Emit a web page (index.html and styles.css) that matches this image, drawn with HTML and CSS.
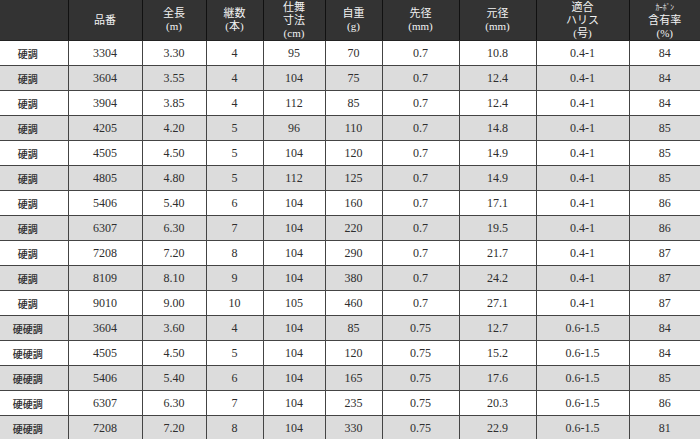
FILE: index.html
```html
<!DOCTYPE html>
<html lang="ja">
<head>
<meta charset="utf-8">
<link rel="stylesheet" href="styles.css">
</head>
<body>
<table class="spec">
  <colgroup>
    <col class="c1"><col class="c2"><col class="c3"><col class="c4"><col class="c5">
    <col class="c6"><col class="c7"><col class="c8"><col class="c9"><col class="c10">
  </colgroup>
  <thead>
    <tr>
      <th></th>
      <th>品番</th>
      <th>全長<br>(m)</th>
      <th>継数<br>(本)</th>
      <th>仕舞<br>寸法<br>(cm)</th>
      <th>自重<br>(g)</th>
      <th>先径<br>(mm)</th>
      <th>元径<br>(mm)</th>
      <th>適合<br>ハリス<br>(号)</th>
      <th><span class="small">ｶｰﾎﾞﾝ</span><br>含有率<br>(%)</th>
    </tr>
  </thead>
  <tbody>
    <tr><td class="type">硬調</td><td>3304</td><td>3.30</td><td>4</td><td>95</td><td>70</td><td>0.7</td><td>10.8</td><td>0.4-1</td><td>84</td></tr>
    <tr><td class="type">硬調</td><td>3604</td><td>3.55</td><td>4</td><td>104</td><td>75</td><td>0.7</td><td>12.4</td><td>0.4-1</td><td>84</td></tr>
    <tr><td class="type">硬調</td><td>3904</td><td>3.85</td><td>4</td><td>112</td><td>85</td><td>0.7</td><td>12.4</td><td>0.4-1</td><td>84</td></tr>
    <tr><td class="type">硬調</td><td>4205</td><td>4.20</td><td>5</td><td>96</td><td>110</td><td>0.7</td><td>14.8</td><td>0.4-1</td><td>85</td></tr>
    <tr><td class="type">硬調</td><td>4505</td><td>4.50</td><td>5</td><td>104</td><td>120</td><td>0.7</td><td>14.9</td><td>0.4-1</td><td>85</td></tr>
    <tr><td class="type">硬調</td><td>4805</td><td>4.80</td><td>5</td><td>112</td><td>125</td><td>0.7</td><td>14.9</td><td>0.4-1</td><td>85</td></tr>
    <tr><td class="type">硬調</td><td>5406</td><td>5.40</td><td>6</td><td>104</td><td>160</td><td>0.7</td><td>17.1</td><td>0.4-1</td><td>86</td></tr>
    <tr><td class="type">硬調</td><td>6307</td><td>6.30</td><td>7</td><td>104</td><td>220</td><td>0.7</td><td>19.5</td><td>0.4-1</td><td>86</td></tr>
    <tr><td class="type">硬調</td><td>7208</td><td>7.20</td><td>8</td><td>104</td><td>290</td><td>0.7</td><td>21.7</td><td>0.4-1</td><td>87</td></tr>
    <tr><td class="type">硬調</td><td>8109</td><td>8.10</td><td>9</td><td>104</td><td>380</td><td>0.7</td><td>24.2</td><td>0.4-1</td><td>87</td></tr>
    <tr><td class="type">硬調</td><td>9010</td><td>9.00</td><td>10</td><td>105</td><td>460</td><td>0.7</td><td>27.1</td><td>0.4-1</td><td>87</td></tr>
    <tr><td class="type">硬硬調</td><td>3604</td><td>3.60</td><td>4</td><td>104</td><td>85</td><td>0.75</td><td>12.7</td><td>0.6-1.5</td><td>84</td></tr>
    <tr><td class="type">硬硬調</td><td>4505</td><td>4.50</td><td>5</td><td>104</td><td>120</td><td>0.75</td><td>15.2</td><td>0.6-1.5</td><td>84</td></tr>
    <tr><td class="type">硬硬調</td><td>5406</td><td>5.40</td><td>6</td><td>104</td><td>165</td><td>0.75</td><td>17.6</td><td>0.6-1.5</td><td>85</td></tr>
    <tr><td class="type">硬硬調</td><td>6307</td><td>6.30</td><td>7</td><td>104</td><td>235</td><td>0.75</td><td>20.3</td><td>0.6-1.5</td><td>86</td></tr>
    <tr><td class="type">硬硬調</td><td>7208</td><td>7.20</td><td>8</td><td>104</td><td>330</td><td>0.75</td><td>22.9</td><td>0.6-1.5</td><td>81</td></tr>
  </tbody>
</table>
</body>
</html>
```
FILE: styles.css
```css
html, body {
  margin: 0;
  padding: 0;
  background: #ffffff;
}

.spec {
  width: 700px;
  table-layout: fixed;
  border-collapse: collapse;
  font-family: "Liberation Serif", "Noto Sans CJK JP", serif;
  color: #2e2e2e;
}

.c1 { width: 68px; }
.c2 { width: 74px; }
.c3 { width: 64px; }
.c4 { width: 57px; }
.c5 { width: 62px; }
.c6 { width: 57px; }
.c7 { width: 77px; }
.c8 { width: 77px; }
.c9 { width: 93px; }
.c10 { width: 71px; }

.spec th {
  background: #333333;
  color: #f2f2f2;
  font-weight: normal;
  font-size: 11px;
  line-height: 13px;
  height: 40px;
  padding: 0;
  text-align: center;
  vertical-align: middle;
  border-left: 1px solid #111111;
  border-bottom: 1px solid #222222;
}

.spec th:first-child { border-left: none; }

.spec th .small {
  font-size: 7.5px;
}

.spec td {
  height: 24px;
  padding: 0;
  font-size: 12px;
  text-align: center;
  vertical-align: middle;
  border-left: 1px solid #444444;
  border-bottom: 1px solid #444444;
}

.spec td:first-child { border-left: none; }

.spec tbody tr:nth-child(even) td {
  background: #dcdcdc;
}

.spec td.type {
  font-family: "Noto Sans CJK JP", sans-serif;
  font-size: 10px;
  font-weight: 500;
  padding-right: 12px;
  color: #2a2a2a;
}
```
